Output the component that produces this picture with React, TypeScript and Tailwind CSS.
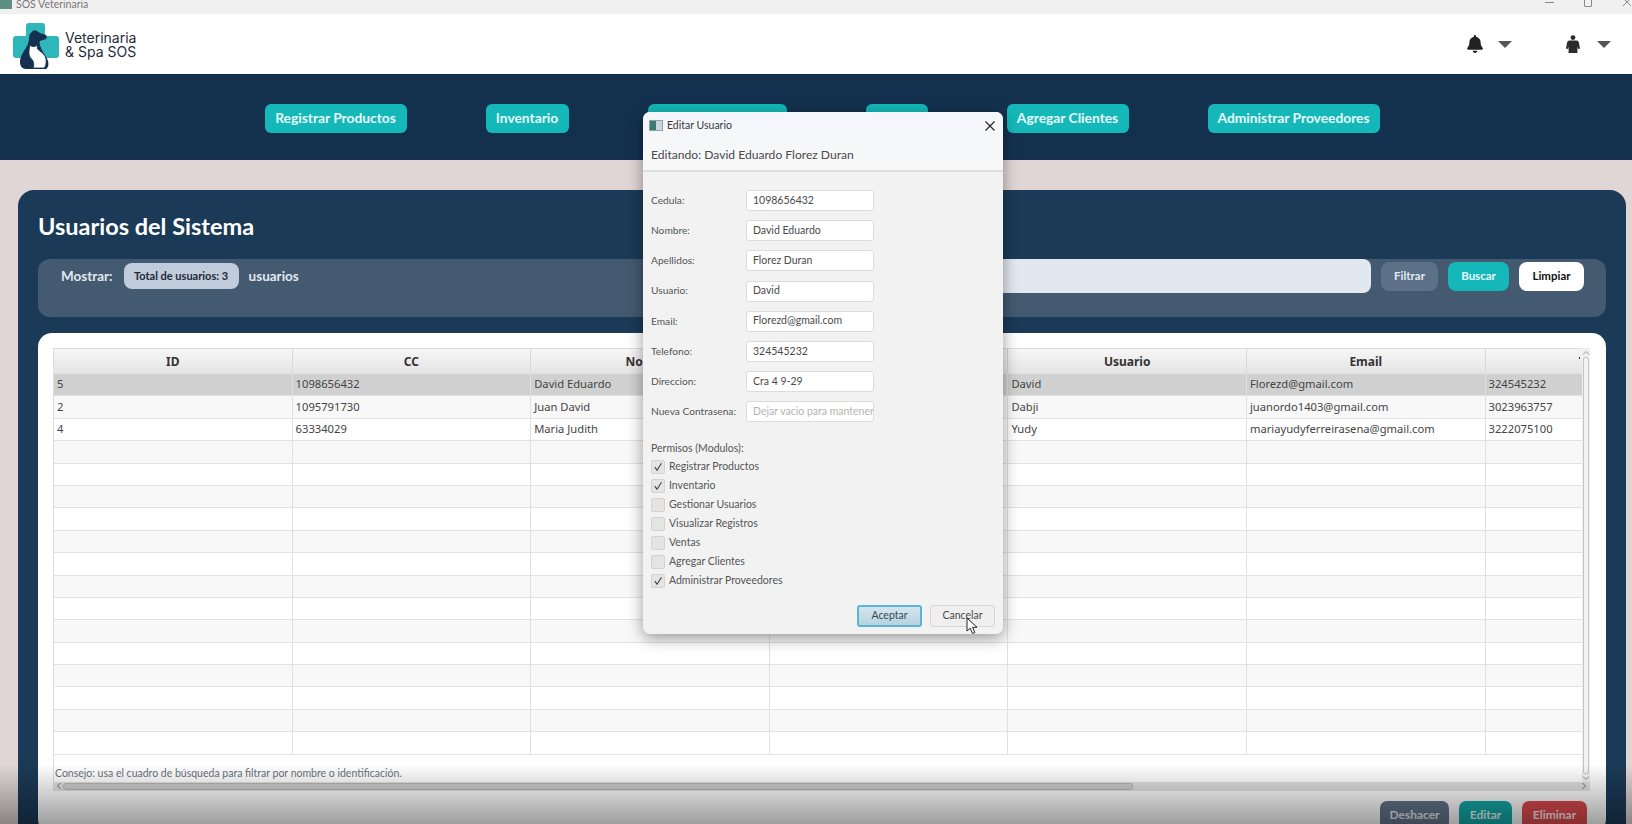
import { FaBell } from "react-icons/fa";

const navItems = [
  { label: "Registrar Productos", width: "w-[142px]" },
  { label: "Inventario", width: "w-[83px]" },
  { label: "Gestionar Usuarios", width: "w-[139px]" },
  { label: "Ventas", width: "w-[62px]" },
  { label: "Agregar Clientes", width: "w-[122px]" },
  { label: "Administrar Proveedores", width: "w-[172px]" },
];

const columns = ["ID", "CC", "Nombre", "Apellidos", "Usuario", "Email", "Telefono"];

const users = [
  ["5", "1098656432", "David Eduardo", "Florez Duran", "David", "Florezd@gmail.com", "324545232"],
  ["2", "1095791730", "Juan David", "Ordonez", "Dabji", "juanordo1403@gmail.com", "3023963757"],
  ["4", "63334029", "Maria Judith", "Ferreira", "Yudy", "mariayudyferreirasena@gmail.com", "3222075100"],
];

const fields = [
  { label: "Cedula:", value: "1098656432" },
  { label: "Nombre:", value: "David Eduardo" },
  { label: "Apellidos:", value: "Florez Duran" },
  { label: "Usuario:", value: "David" },
  { label: "Email:", value: "Florezd@gmail.com" },
  { label: "Telefono:", value: "324545232" },
  { label: "Direccion:", value: "Cra 4 9-29" },
];

const permissions = [
  { label: "Registrar Productos", checked: true },
  { label: "Inventario", checked: true },
  { label: "Gestionar Usuarios", checked: false },
  { label: "Visualizar Registros", checked: false },
  { label: "Ventas", checked: false },
  { label: "Agregar Clientes", checked: false },
  { label: "Administrar Proveedores", checked: true },
];

const emptyRows = Array.from({ length: 14 }, (_, i) => i);

function Logo() {
  return (
    <svg width="46" height="46" viewBox="0 0 46 46">
      <path d="M16 0h13a3 3 0 0 1 3 3v10h11a3 3 0 0 1 3 3v16a3 3 0 0 1-3 3H32v6H13v-6H3a3 3 0 0 1-3-3V16a3 3 0 0 1 3-3h10V3a3 3 0 0 1 3-3z" fill="#2fb6b8" />
      <path d="M19 9c1-2 3-2 5-1l3 2 6 2c1 1 1 3 0 4l-6 2c-1 2 0 4 1 7 2 5 6 9 7 13 1 4 0 7-2 8H13c-4 0-6-3-6-7 0-6 4-11 7-16 1-2 2-5 2-8 0-3 1-5 3-6z" fill="#14324f" />
      <path d="M17 22l2 1.500h3l2-1.500.5 4c2 2 6 4 8 8 1 3 1 7-.5 10l-1 1H20c1-2 1-4 0-7-1-2-4-4-4-7 0-3 0-4 1-9z" fill="#ffffff" stroke="#14324f" strokeWidth="0.800" />
    </svg>
  );
}

function PersonIcon() {
  return (
    <svg width="14" height="18" viewBox="0 0 14 18" fill="#2b2b2b">
      <circle cx="7" cy="2.600" r="2.400" />
      <path d="M3.500 5.500h7c1.200 0 2 .8 2.400 2l1.100 6-2 .5-.6-2.500V18H2.600v-6.500l-.6 2.500-2-.5 1.100-6c.4-1.200 1.200-2 2.400-2z" />
    </svg>
  );
}

function Caret() {
  return <div className="h-0 w-0 border-x-[7px] border-t-[7px] border-x-transparent border-t-[#555555]" />;
}

function CheckMark() {
  return (
    <svg width="10" height="10" viewBox="0 0 10 10" fill="none" stroke="#444444" strokeWidth="1.100">
      <path d="M1.800 5.200 4 8.200 8.500 1.200" />
    </svg>
  );
}

function EditDialog() {
  return (
    <div className="absolute left-[643px] top-[112px] z-10 flex h-[522px] w-[360px] flex-col overflow-hidden rounded-[7px] bg-[#f2f2f2] font-['Lato',sans-serif] text-[10.500px] text-[#444444] shadow-[0_4px_16px_rgba(0,0,0,0.4)]">
      <div className="h-[60px] shrink-0 border-b-2 border-[#dedede] bg-gradient-to-b from-[#f3f6fa] to-[#f8f8f8]">
        <div className="flex h-[26px] items-center pl-[6px] pr-[7px] pt-[1px]">
          <div className="flex h-[11px] w-[14px] border border-[#8fa0a8] bg-white">
            <div className="h-full w-[6px] bg-[#3d7a72]" />
            <div className="h-full flex-1 bg-[#c9d4dc]" />
          </div>
          <span className="ml-[4px] flex-1 text-[10.500px] text-[#3a3a3a]">Editar Usuario</span>
          <svg width="12" height="12" viewBox="0 0 12 12" fill="none" stroke="#222222" strokeWidth="1.100">
            <path d="M1.500 1.500 10.500 10.500M10.500 1.500 1.500 10.500" />
          </svg>
        </div>
        <div className="mt-[8px] pl-[8px] text-[12.100px] text-[#4a4a4a]">Editando: David Eduardo Florez Duran</div>
      </div>

      <div className="flex flex-col gap-[9.200px] pl-[8px] pt-[18px]">
        {fields.map((f) => (
          <div key={f.label} className="flex h-[21px] items-center">
            <span className="w-[95px] text-[10.200px] text-[#555555]">{f.label}</span>
            <div className="flex h-[21px] w-[128px] items-center rounded-[3px] border border-[#dcdcdc] bg-white pl-[6px] text-[#4a4a4a]">{f.value}</div>
          </div>
        ))}
        <div className="flex h-[21px] items-center">
          <span className="w-[95px] whitespace-nowrap text-[10.200px] text-[#555555]">Nueva Contrasena:</span>
          <div className="flex h-[21px] w-[128px] items-center overflow-hidden whitespace-nowrap rounded-[3px] border border-[#dcdcdc] bg-white px-[6px] text-[#b4b4b4]">Dejar vacio para mantener</div>
        </div>
      </div>

      <div className="mt-[19px] pl-[8px] leading-[14px] text-[#555555]">Permisos (Modulos):</div>
      <div className="mt-[5px] flex flex-col gap-[5px] pl-[8px]">
        {permissions.map((p) => (
          <div key={p.label} className="flex h-[14px] items-center gap-[4px]">
            <div className="flex h-[14px] w-[14px] items-center justify-center rounded-[2px] border border-[#d2d2d2] bg-[#e4e4e4]">
              {p.checked && <CheckMark />}
            </div>
            <span className="text-[#555555]">{p.label}</span>
          </div>
        ))}
      </div>

      <div className="mt-[17px] flex justify-end gap-[8px] pr-[8px]">
        <button className="h-[22px] w-[65px] rounded-[3px] border-2 border-[#5cb4d6] bg-gradient-to-b from-[#d4e6ee] to-[#b5d2e0] text-[#3a4a55]">Aceptar</button>
        <button className="h-[22px] w-[65px] rounded-[3px] border border-[#d6d6d6] bg-[#efefef] text-[#4a4a4a]">Cancelar</button>
      </div>

      <svg className="absolute left-[323px] top-[505px]" width="14" height="18" viewBox="0 0 14 18" fill="#ffffff" stroke="#222222" strokeWidth="1">
        <path d="M1 1v13l3.200-2.800 2.300 5.300 2.400-1-2.300-5.200h4.400z" />
      </svg>
    </div>
  );
}

function UserTable() {
  return (
    <div className="flex w-[1537px] flex-col">
      <div className="flex">
        <div className="relative w-[1529px] overflow-hidden border-l border-t border-[#dcdcdc]">
          <div className="flex h-[25px] w-[1880px] bg-gradient-to-b from-[#f6f6f6] to-[#e4e4e4]">
            {columns.map((c) => (
              <div key={c} className={`flex shrink-0 items-center justify-center border-r border-[#d8d8d8] pt-[1px] text-[12px] font-bold text-[#333333] ${c === "Telefono" ? "w-[440px]" : "w-[238.600px]"}`}>
                {c}
              </div>
            ))}
          </div>
          <div className="absolute right-[2px] top-[8px] h-[1.500px] w-[1.500px] bg-[#333333]" />
          {users.map((u, i) => (
            <div key={u[0]} className={`flex h-[22.400px] w-[1680px] border-b border-[#e2e2e2] text-[11.200px] text-[#444444] ${i === 0 ? "bg-[#d0d0d0]" : i === 1 ? "bg-[#f8f8f8]" : "bg-white"}`}>
              {u.map((v, j) => (
                <div key={j} className="flex w-[238.600px] shrink-0 items-center whitespace-nowrap border-r border-[#e0e0e0] pl-[3px]">
                  {v}
                </div>
              ))}
            </div>
          ))}
          {emptyRows.map((r) => (
            <div key={r} className={`flex h-[22.400px] w-[1680px] border-b border-[#e2e2e2] ${r % 2 === 0 ? "bg-[#f8f8f8]" : "bg-white"}`}>
              {columns.map((c) => (
                <div key={c} className="w-[238.600px] shrink-0 border-r border-[#e0e0e0]" />
              ))}
            </div>
          ))}
          <div className="flex h-[27px] items-end bg-white pl-[1px] font-['Lato',sans-serif] text-[10.500px] text-[#6b7280]">Consejo: usa el cuadro de búsqueda para filtrar por nombre o identificación.</div>
        </div>
        <div className="flex w-[8px] flex-col items-center bg-[#f0f0f0]">
          <svg className="mt-[2px]" width="8" height="6" viewBox="0 0 8 6" fill="none" stroke="#999999"><path d="M1 4.500 4 1.500 7 4.500" /></svg>
          <div className="mt-[1px] w-[6px] flex-1 rounded-[2px] border border-[#c4c4c4] bg-[#f4f4f4]" />
          <svg className="my-[1px]" width="8" height="6" viewBox="0 0 8 6" fill="none" stroke="#999999"><path d="M1 1.500 4 4.500 7 1.500" /></svg>
        </div>
      </div>
      <div className="flex h-[9px] w-[1537px] items-center bg-[#e2e2e2] px-[3px]">
        <svg width="6" height="8" viewBox="0 0 6 8" fill="none" stroke="#777777"><path d="M4.500 1 1.500 4 4.500 7" /></svg>
        <div className="ml-[1px] h-[7px] w-[1070px] rounded-[3px] border border-[#b8b8b8] bg-[#cfcfcf]" />
        <div className="flex-1" />
        <svg width="6" height="8" viewBox="0 0 6 8" fill="none" stroke="#777777"><path d="M1.500 1 4.500 4 1.500 7" /></svg>
      </div>
    </div>
  );
}

export default function App() {
  return (
    <div className="relative flex h-[824px] w-[1632px] flex-col overflow-hidden bg-[#e0d6d6] font-['Noto_Sans',sans-serif]">
      {/* window title bar */}
      <div className="flex h-[14px] shrink-0 items-center overflow-hidden bg-[#f0f0f0]">
        <div className="-mt-[6px] h-[10px] w-[12px] bg-[#5f8f84]" />
        <span className="-mt-[5px] ml-[4px] font-['Lato',sans-serif] text-[10.500px] text-[#777777]">SOS Veterinaria</span>
        <div className="-mt-[10px] ml-auto flex items-center gap-[30px] text-[#888888]">
          <div className="h-px w-[9px] bg-[#888888]" />
          <div className="h-[9px] w-[8px] rounded-[1px] border border-[#888888]" />
          <svg width="10" height="10" viewBox="0 0 10 10" stroke="#888888"><path d="M1 1 9 9M9 1 1 9" /></svg>
        </div>
      </div>

      <header className="flex h-[60px] shrink-0 items-center bg-white pl-[13px] pr-[21px]">
        <div className="mt-[3px]"><Logo /></div>
        <div className="ml-[6px] mt-[2px] font-['Inter',sans-serif] text-[14px] leading-[14px] text-[#1d2b3a]">
          <div>Veterinaria</div>
          <div>&amp; Spa SOS</div>
        </div>
        <div className="ml-auto flex items-center">
          <FaBell className="text-[18px] text-[#222222]" />
          <div className="ml-[14px]"><Caret /></div>
          <div className="ml-[54px]"><PersonIcon /></div>
          <div className="ml-[17px]"><Caret /></div>
        </div>
      </header>

      <nav className="flex h-[86px] shrink-0 items-start justify-center gap-[79px] border-t border-[#0f2a44] bg-[#13314f] pl-[12px] pt-[29px]">
        {navItems.map((n) => (
          <button key={n.label} className={`h-[29px] rounded-[6px] bg-[#14b8b8] font-['Lato',sans-serif] text-[13.800px] font-bold text-[#e8f8f8] ${n.width}`}>
            {n.label}
          </button>
        ))}
      </nav>

      <main className="min-h-0 flex-1 pl-[18px] pr-[6px] pt-[30px]">
        <section className="h-[660px] rounded-[16px] bg-[#1b3a57] px-[20px] pt-[21px]">
          <h1 className="font-['Lato',sans-serif] text-[23.500px] font-bold leading-[30px] text-white">Usuarios del Sistema</h1>
          <div className="mt-[18px] flex h-[58px] items-start rounded-[12px] bg-[#435a70] pl-[23px] pr-[22px]">
            <div className="flex h-[34px] items-center font-['Lato',sans-serif]">
              <span className="text-[13.500px] font-bold text-[#e2e8f0]">Mostrar:</span>
              <span className="ml-[11px] flex h-[26px] w-[115px] items-center justify-center rounded-[8px] bg-[#c0cbdb] text-[11px] font-bold text-[#1f2937]">Total de usuarios: 3</span>
              <span className="ml-[10px] text-[13.500px] font-bold text-[#e2e8f0]">usuarios</span>
            </div>
            <div className="ml-[360px] h-[34px] flex-1 rounded-[8px] bg-[#e2e8f0]" />
            <div className="ml-[10px] flex h-[34px] items-center gap-[10px] font-['Lato',sans-serif]">
              <button className="h-[29px] w-[57px] rounded-[8px] bg-[#5c7087] text-[11.500px] font-bold text-[#e2e8f0]">Filtrar</button>
              <button className="h-[29px] w-[61px] rounded-[8px] bg-[#14b8b8] text-[11.500px] font-bold text-[#e8f8f8]">Buscar</button>
              <button className="h-[29px] w-[65px] rounded-[8px] bg-white text-[11.500px] font-bold text-[#111111]">Limpiar</button>
            </div>
          </div>

          <div className="mt-[16px] h-[500px] rounded-[14px] bg-white pl-[15px] pt-[15px]">
            <UserTable />
            <div className="mt-[10px] flex justify-end gap-[10px] pr-[19px] font-['Lato',sans-serif]">
              <button className="h-[28px] w-[69px] rounded-[7px] bg-[#64748b] text-[12px] font-bold text-[#e2e8f0]">Deshacer</button>
              <button className="h-[28px] w-[53px] rounded-[7px] bg-[#14a8a8] text-[12px] font-bold text-[#e2f5f5]">Editar</button>
              <button className="h-[28px] w-[65px] rounded-[7px] bg-[#dc4a4f] text-[12px] font-bold text-[#fde8e8]">Eliminar</button>
            </div>
          </div>
        </section>
      </main>

      <EditDialog />

      {/* video player shade along the bottom edge */}
      <div className="pointer-events-none absolute inset-x-0 bottom-0 z-20 h-[60px] bg-gradient-to-b from-transparent to-[rgba(0,0,0,0.38)]" />
    </div>
  );
}
